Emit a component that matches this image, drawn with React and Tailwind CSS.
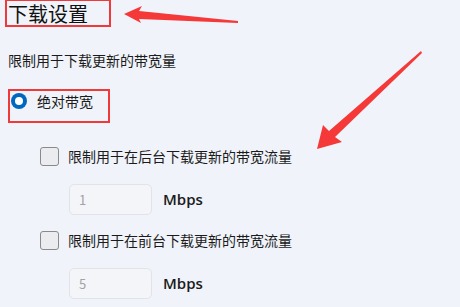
import React from "react";

const cjk = { fontFamily: '"Noto Sans CJK SC", "Noto Sans", sans-serif' };

function LimitRow({ label, value, top, inputTop }) {
  return (
    <>
      <div className="flex items-center h-5 pl-[40px]" style={{ marginTop: top }}>
        <div className="w-[19px] h-[19px] rounded-[3px] border border-[#8a8a8a] bg-[#eaecf0]" />
        <span className="ml-[9px] text-[14px] leading-5 text-[#1b1b1b]">{label}</span>
      </div>
      <div className="flex items-center pl-[69px]" style={{ marginTop: inputTop }}>
        <div className="w-[83px] h-[31px] rounded-[5px] border border-[#e1e3e8] bg-[#f4f5f9] flex items-center pl-[9px] text-[13px] text-[#a3a3a3]">
          {value}
        </div>
        <span className="ml-[11px] text-[15px] font-semibold text-[#1b1b1b] font-['Open_Sans',sans-serif]">
          Mbps
        </span>
      </div>
    </>
  );
}

export default function App() {
  return (
    <div
      className="relative w-[460px] h-[307px] overflow-hidden bg-[#f0f3f9]"
      style={cjk}
    >
      <div className="flex flex-col">
        <h1 className="h-7 pl-[8px] text-[20px] leading-7 font-normal text-[#111]">
          下载设置
        </h1>
        <p className="mt-[22px] pl-[8px] text-[14px] leading-5 text-[#1b1b1b]">
          限制用于下载更新的带宽量
        </p>
        <div className="mt-[21px] flex items-center h-5 pl-[11px]">
          <div className="w-4 h-4 rounded-full bg-[#0067c0] flex items-center justify-center">
            <div className="w-2 h-2 rounded-full bg-white" />
          </div>
          <span className="ml-[10px] text-[14px] leading-5 text-[#1b1b1b]">绝对带宽</span>
        </div>
        <LimitRow
          label="限制用于在后台下载更新的带宽流量"
          value="1"
          top={35}
          inputTop={18}
        />
        <LimitRow
          label="限制用于在前台下载更新的带宽流量"
          value="5"
          top={15}
          inputTop={18}
        />
      </div>

      {/* annotations */}
      <div className="absolute left-[5px] top-[-1px] w-[106px] h-[28px] border-2 border-[#f03a3a]" />
      <div className="absolute left-[8px] top-[89px] w-[102px] h-[34px] border-2 border-[#f03a3a]" />
      <svg
        className="absolute inset-0 pointer-events-none"
        width="460"
        height="307"
        viewBox="0 0 460 307"
      >
        <polygon
          points="124,14 142,6 139,11 238,21 238,23 139,19 141,23"
          fill="#f53838"
        />
        <polygon
          points="317,149 323,125 329,131 421,51 422,53 335,137 342,142"
          fill="#f53838"
        />
      </svg>
    </div>
  );
}
